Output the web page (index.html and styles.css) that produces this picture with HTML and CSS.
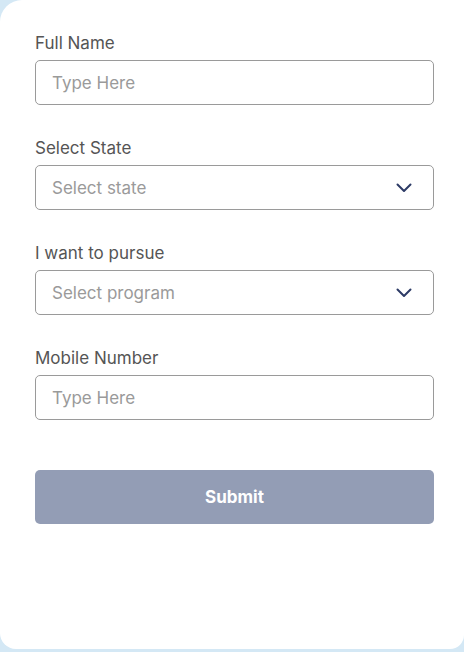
FILE: index.html
```html
<!DOCTYPE html>
<html lang="en">
<head>
<meta charset="utf-8">
<title>Enquiry Form</title>
<link rel="stylesheet" href="styles.css">
</head>
<body>
<div class="card">
  <form class="form">
    <div class="field">
      <label class="label">Full Name</label>
      <div class="input"><span class="placeholder">Type Here</span></div>
    </div>
    <div class="field">
      <label class="label">Select State</label>
      <div class="input select"><span class="placeholder">Select state</span>
        <svg class="chev" width="16" height="10" viewBox="0 0 16 10"><path d="M1.5 1.5 L8 8 L14.5 1.5" fill="none" stroke="#2d3b66" stroke-width="2" stroke-linecap="round" stroke-linejoin="round"/></svg>
      </div>
    </div>
    <div class="field">
      <label class="label">I want to pursue</label>
      <div class="input select"><span class="placeholder">Select program</span>
        <svg class="chev" width="16" height="10" viewBox="0 0 16 10"><path d="M1.5 1.5 L8 8 L14.5 1.5" fill="none" stroke="#2d3b66" stroke-width="2" stroke-linecap="round" stroke-linejoin="round"/></svg>
      </div>
    </div>
    <div class="field">
      <label class="label">Mobile Number</label>
      <div class="input"><span class="placeholder">Type Here</span></div>
    </div>
    <button type="button" class="submit">Submit</button>
  </form>
</div>
</body>
</html>
```
FILE: styles.css
```css
html, body {
  margin: 0;
  padding: 0;
}
body {
  background: #d4e8f5;
  height: 652px;
  font-family: "Inter", "Liberation Sans", sans-serif;
}
.card {
  background: #ffffff;
  width: 464px;
  height: 649px;
  box-sizing: border-box;
  border-radius: 22px 0 14px 16px;
  padding: 31px 30px 0 35px;
}
.form {
  display: flex;
  flex-direction: column;
}
.field {
  display: flex;
  flex-direction: column;
  margin-bottom: 31px;
}
.label {
  font-size: 17px;
  line-height: 24px;
  color: #555555;
  margin-bottom: 5px;
}
.input {
  height: 45px;
  box-sizing: border-box;
  border: 1px solid #9a9a9a;
  border-radius: 5px;
  display: flex;
  align-items: center;
  padding: 0 21px 0 16px;
}
.select {
  justify-content: space-between;
}
.placeholder {
  font-size: 17px;
  color: #9a9a9a;
}
.chev {
  display: block;
}
.submit {
  margin-top: 19px;
  height: 54px;
  border: none;
  border-radius: 5px;
  background: #939db5;
  color: #ffffff;
  font-family: "Inter", "Liberation Sans", sans-serif;
  font-weight: 700;
  font-size: 17px;
}
```
